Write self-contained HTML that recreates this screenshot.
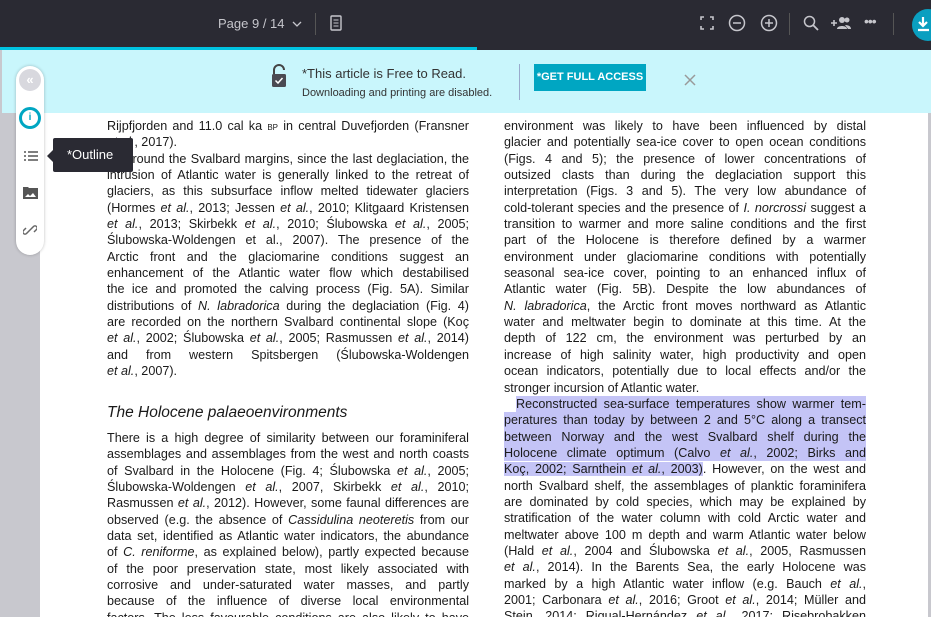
<!DOCTYPE html>
<html><head><meta charset="utf-8"><style>
*{margin:0;padding:0;box-sizing:border-box}
html,body{width:931px;height:617px;overflow:hidden}
body{background:#c8c8ce;font-family:"Liberation Sans",sans-serif;position:relative}
.page{position:absolute;left:40px;top:50px;width:888px;height:567px;background:#fff}
.top{position:absolute;left:0;top:0;width:931px;height:47px;background:#2a2a33;color:#c8c8cc}
.prog{position:absolute;left:0;top:47px;width:931px;height:3px;background:#2a2a33}
.prog div{width:477px;height:3px;background:#00c2e0}
.banner{position:absolute;left:2px;top:50px;width:929px;height:63px;background:#c9f6fc}
.col{position:absolute;font-size:12.6px;line-height:16.35px;color:#1a1a1a;font-family:"Liberation Sans",sans-serif}
.col div{text-align:justify;text-align-last:justify;white-space:nowrap;height:16.35px}
.col div.l{text-align-last:left}
.col i{font-style:italic}
.hl{background:#c4c4f6}
.side{position:absolute;left:16px;top:66px;width:28px;height:189px;background:#fff;border-radius:14px;box-shadow:0 0 3px rgba(0,0,0,.25)}
</style></head><body>
<div class="page"></div>

<div class="col" style="left:107px;top:118px;width:362px;height:499px;overflow:hidden">
<div>Rijpfjorden and 11.0 cal ka <span style="font-size:8px">BP</span> in central Duvefjorden (Fransner</div>
<div class="l"><i>et al.</i>, 2017).</div>
<div>&nbsp;&nbsp;&nbsp;&nbsp;Around the Svalbard margins, since the last deglaciation, the</div>
<div>intrusion of Atlantic water is generally linked to the retreat of</div>
<div>glaciers, as this subsurface inflow melted tidewater glaciers</div>
<div>(Hormes <i>et al.</i>, 2013; Jessen <i>et al.</i>, 2010; Klitgaard Kristensen</div>
<div><i>et al.</i>, 2013; Skirbekk <i>et al.</i>, 2010; Ślubowska <i>et al.</i>, 2005;</div>
<div>Ślubowska-Woldengen et al., 2007). The presence of the</div>
<div>Arctic front and the glaciomarine conditions suggest an</div>
<div>enhancement of the Atlantic water flow which destabilised</div>
<div>the ice and promoted the calving process (Fig. 5A). Similar</div>
<div>distributions of <i>N. labradorica</i> during the deglaciation (Fig. 4)</div>
<div>are recorded on the northern Svalbard continental slope (Koç</div>
<div><i>et al.</i>, 2002; Ślubowska <i>et al.</i>, 2005; Rasmussen <i>et al.</i>, 2014)</div>
<div>and from western Spitsbergen (Ślubowska-Woldengen</div>
<div class="l"><i>et al.</i>, 2007).</div>
<div class="l"></div>
<div class="l" style="font-size:15.5px;font-style:italic;height:34px;line-height:34px">The Holocene palaeoenvironments</div>
<div>There is a high degree of similarity between our foraminiferal</div>
<div>assemblages and assemblages from the west and north coasts</div>
<div>of Svalbard in the Holocene (Fig. 4; Ślubowska <i>et al.</i>, 2005;</div>
<div>Ślubowska-Woldengen <i>et al.</i>, 2007, Skirbekk <i>et al.</i>, 2010;</div>
<div>Rasmussen <i>et al.</i>, 2012). However, some faunal differences are</div>
<div>observed (e.g. the absence of <i>Cassidulina neoteretis</i> from our</div>
<div>data set, identified as Atlantic water indicators, the abundance</div>
<div>of <i>C. reniforme</i>, as explained below), partly expected because</div>
<div>of the poor preservation state, most likely associated with</div>
<div>corrosive and under-saturated water masses, and partly</div>
<div>because of the influence of diverse local environmental</div>
<div>factors. The less favourable conditions are also likely to have</div>
</div>

<div class="col" style="left:504px;top:118px;width:362px;height:499px;overflow:hidden">
<div>environment was likely to have been influenced by distal</div>
<div>glacier and potentially sea-ice cover to open ocean conditions</div>
<div>(Figs. 4 and 5); the presence of lower concentrations of</div>
<div>outsized clasts than during the deglaciation support this</div>
<div>interpretation (Figs. 3 and 5). The very low abundance of</div>
<div>cold-tolerant species and the presence of <i>I. norcrossi</i> suggest a</div>
<div>transition to warmer and more saline conditions and the first</div>
<div>part of the Holocene is therefore defined by a warmer</div>
<div>environment under glaciomarine conditions with potentially</div>
<div>seasonal sea-ice cover, pointing to an enhanced influx of</div>
<div>Atlantic water (Fig. 5B). Despite the low abundances of</div>
<div><i>N. labradorica</i>, the Arctic front moves northward as Atlantic</div>
<div>water and meltwater begin to dominate at this time. At the</div>
<div>depth of 122 cm, the environment was perturbed by an</div>
<div>increase of high salinity water, high productivity and open</div>
<div>ocean indicators, potentially due to local effects and/or the</div>
<div class="l">stronger incursion of Atlantic water.</div>
<div style="padding-left:12px"><span class="hl" style="display:block;text-align-last:justify">Reconstructed sea-surface temperatures show warmer tem-</span></div>
<div class="hl">peratures than today by between 2 and 5°C along a transect</div>
<div class="hl">between Norway and the west Svalbard shelf during the</div>
<div class="hl">Holocene climate optimum (Calvo <i>et al.</i>, 2002; Birks and</div>
<div><span class="hl">Koç, 2002; Sarnthein <i>et al.</i>, 2003)</span>. However, on the west and</div>
<div>north Svalbard shelf, the assemblages of planktic foraminifera</div>
<div>are dominated by cold species, which may be explained by</div>
<div>stratification of the water column with cold Arctic water and</div>
<div>meltwater above 100 m depth and warm Atlantic water below</div>
<div>(Hald <i>et al.</i>, 2004 and Ślubowska <i>et al.</i>, 2005, Rasmussen</div>
<div><i>et al.</i>, 2014). In the Barents Sea, the early Holocene was</div>
<div>marked by a high Atlantic water inflow (e.g. Bauch <i>et al.</i>,</div>
<div>2001; Carbonara <i>et al.</i>, 2016; Groot <i>et al.</i>, 2014; Müller and</div>
<div>Stein, 2014; Rigual-Hernández <i>et al.</i>, 2017; Risebrobakken</div>
</div>

<div class="top">
 <div style="position:absolute;left:218px;top:16px;font-size:13px;color:#c6c6cc">Page 9 / 14 &nbsp;<svg width="10" height="8" viewBox="0 0 10 8"><path d="M1 2l4 4 4-4" stroke="#c6c6cc" fill="none" stroke-width="1.3"/></svg></div>
 <div style="position:absolute;left:315px;top:13px;width:1px;height:22px;background:#555"></div>
 <svg style="position:absolute;left:330px;top:15px" width="12" height="16"><rect x="1" y="1" width="10" height="14" rx="1" fill="none" stroke="#c6c6cc" stroke-width="1.4"/><path d="M3.5 5h5M3.5 8h5M3.5 11h5" stroke="#c6c6cc"/></svg>
 <svg style="position:absolute;left:700px;top:16px" width="14" height="14"><path d="M1 4V1h3M10 1h3v3M13 10v3h-3M4 13H1v-3" stroke="#c6c6cc" fill="none" stroke-width="1.6"/></svg>
 <svg style="position:absolute;left:728px;top:14px" width="18" height="18"><circle cx="9" cy="9" r="7.5" stroke="#c6c6cc" fill="none" stroke-width="1.5"/><path d="M5 9h8" stroke="#c6c6cc" stroke-width="1.5"/></svg>
 <svg style="position:absolute;left:760px;top:14px" width="18" height="18"><circle cx="9" cy="9" r="7.5" stroke="#c6c6cc" fill="none" stroke-width="1.5"/><path d="M5 9h8M9 5v8" stroke="#c6c6cc" stroke-width="1.5"/></svg>
 <div style="position:absolute;left:789px;top:13px;width:1px;height:22px;background:#555"></div>
 <svg style="position:absolute;left:803px;top:15px" width="16" height="16"><circle cx="6.5" cy="6.5" r="5" stroke="#c6c6cc" fill="none" stroke-width="1.5"/><path d="M10 10l5 5" stroke="#c6c6cc" stroke-width="1.8"/></svg>
 <svg style="position:absolute;left:830px;top:15px" width="22" height="16"><path d="M1 8h6M4 5v6" stroke="#c6c6cc" stroke-width="1.6"/><circle cx="12" cy="5" r="3" fill="#c6c6cc"/><circle cx="17" cy="5" r="2.5" fill="#c6c6cc"/><path d="M7 14c0-4 10-4 10 0zM15 10c3 0 6 1 6 4h-3z" fill="#c6c6cc"/></svg>
 <div style="position:absolute;left:864px;top:13px;font-size:14px;color:#c6c6cc;letter-spacing:-1px">•••</div>
 <div style="position:absolute;left:893px;top:13px;width:1px;height:22px;background:#555"></div>
 <div style="position:absolute;left:912px;top:9px;width:32px;height:32px;border-radius:50%;background:#0a9fc0"></div>
 <svg style="position:absolute;left:916px;top:16px" width="15" height="16"><path d="M7 1v9M3 6l4 4 4-4M2 14h11" stroke="#fff" stroke-width="2.2" fill="none"/></svg>
</div>
<div class="prog"><div></div></div>

<div class="banner">
 <svg style="position:absolute;left:268px;top:14px" width="18" height="24"><path d="M4 10V6a5 5 0 0 1 10 0" stroke="#444" stroke-width="2" fill="none"/><rect x="2" y="10" width="14" height="13" rx="1.5" fill="#4a4a52"/><path d="M5.5 16.5l2.5 2.5 4.5-5" stroke="#fff" stroke-width="1.5" fill="none"/></svg>
 <div style="position:absolute;left:300px;top:16px;font-size:13px;color:#333">*This article is Free to Read.</div>
 <div style="position:absolute;left:300px;top:37px;font-size:11px;color:#333">Downloading and printing are disabled.</div>
 <div style="position:absolute;left:517px;top:14px;width:1px;height:36px;background:#9ac"></div>
 <div style="position:absolute;left:532px;top:14px;width:112px;height:27px;background:#00a6c2;color:#fff;font-size:11px;font-weight:bold;line-height:27px;text-align:center">*GET FULL ACCESS</div>
 <svg style="position:absolute;left:682px;top:24px" width="12" height="12"><path d="M1 1l10 10M11 1L1 11" stroke="#999" stroke-width="1.5"/></svg>
</div>

<div class="side">
 <div style="position:absolute;left:3px;top:3px;width:22px;height:22px;border-radius:50%;background:#d8d8de;color:#fff;font-size:13px;text-align:center;line-height:21px;font-weight:bold">«</div>
 <div style="position:absolute;left:3px;top:41px;width:22px;height:22px;border-radius:50%;border:3px solid #00a6c2;color:#00a6c2;font-size:10px;text-align:center;line-height:16px;font-weight:bold">i</div>
 <svg style="position:absolute;left:8px;top:85px" width="14" height="10"><path d="M0 1h2M4 1h10M0 5h2M4 5h10M0 9h2M4 9h10" stroke="#555" stroke-width="1.6"/></svg>
 <svg style="position:absolute;left:7px;top:120px" width="15" height="13"><path d="M0 1h5l1 1h9v11H0z" fill="#555"/><path d="M2 11l3-3 2 2 3-3 3 4z" fill="#fff"/></svg>
 <svg style="position:absolute;left:7px;top:157px" width="14" height="14"><path d="M6 8l-2.5 2.5a2 2 0 0 1-3-3L3 5M8 6l2.5-2.5a2 2 0 0 1 3 3L11 9M5 9l4-4" stroke="#666" stroke-width="1.5" fill="none"/></svg>
</div>
<div style="position:absolute;left:53px;top:138px;width:80px;height:34px;background:#2a2a33;border-radius:2px;color:#fff;font-size:13px;line-height:34px;padding-left:14px">*Outline</div>
<div style="position:absolute;left:47px;top:150px;width:0;height:0;border:6px solid transparent;border-right-color:#2a2a33;border-left:0"></div>
</body></html>
